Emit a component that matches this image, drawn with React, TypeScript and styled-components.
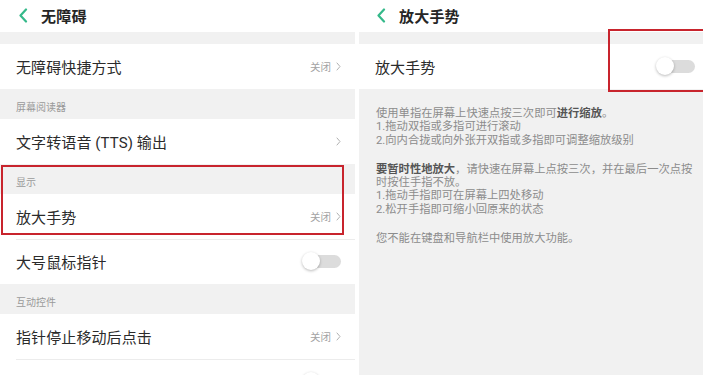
import React, { FC } from "react";
import styled, { createGlobalStyle } from "styled-components";

const GlobalStyle = createGlobalStyle`
    html, body {
        margin: 0;
        padding: 0;
        background: #fff;
        overflow: hidden;
    }
    body {
        font-family: Roboto, "Noto Sans CJK SC", "Noto Sans", sans-serif;
    }
`;

const Page = styled.div`
    width: 703px;
    height: 375px;
    display: flex;
    gap: 4px;
    overflow: hidden;
    background: #fff;
`;

const Panel = styled.div<{ $width?: number }>`
    position: relative;
    flex: ${(p) => (p.$width ? `0 0 ${p.$width}px` : "1")};
    display: flex;
    flex-direction: column;
    background: #fff;
    overflow: hidden;

    & > * {
        flex-shrink: 0;
    }
`;

const Header = styled.div<{ $pad: number }>`
    height: 32px;
    display: flex;
    align-items: center;
    padding-left: ${(p) => p.$pad}px;
    gap: 13px;
    padding-bottom: 1px;
    box-sizing: border-box;

    h1 {
        margin: 0;
        font-size: 15px;
        font-weight: 700;
        color: #262626;
        letter-spacing: 0.2px;
    }
`;

const Band = styled.div`
    height: 12px;
    background: #f1f1f1;
`;

const Section = styled.div`
    height: 30px;
    box-sizing: border-box;
    padding: 13px 16px 0;
    background: #f1f1f1;
    font-size: 10px;
    line-height: 12px;
    color: #9a9a9a;
`;

const Row = styled.div<{ $divider?: boolean; $right?: number }>`
    height: 45px;
    display: flex;
    align-items: center;
    justify-content: space-between;
    padding: 0 ${(p) => p.$right ?? 14}px 0 16px;
    box-sizing: border-box;
    position: relative;

    ${(p) =>
        p.$divider &&
        `
        &::before {
            content: "";
            position: absolute;
            left: 16px;
            right: 0;
            top: 0;
            border-top: 1px solid #ececec;
        }
    `}
`;

const Label = styled.span`
    font-size: 15px;
    color: #2b2b2b;
    letter-spacing: 0.1px;
`;

const Value = styled.span`
    display: flex;
    align-items: center;
    gap: 5px;
    font-size: 10.5px;
    color: #a3a3a3;
`;

const Track = styled.span`
    position: relative;
    width: 34px;
    height: 13px;
    border-radius: 7px;
    background: #dcdcdc;
    display: inline-block;
    margin-left: 6px;

    &::after {
        content: "";
        position: absolute;
        left: -5px;
        top: -3px;
        width: 18px;
        height: 18px;
        border-radius: 50%;
        background: #fff;
        box-shadow: 0 1px 3px rgba(0, 0, 0, 0.28);
    }
`;

const Desc = styled.div`
    flex: 1 0 auto;
    background: #f1f1f1;
    padding: 18px 8px 0 17px;
    font-size: 11.3px;
    line-height: 13.3px;
    color: #8c8c8c;
    white-space: nowrap;

    p {
        margin: 0 0 16px;
    }

    b {
        color: #555;
        font-weight: 700;
    }
`;

const Marker = styled.div<{ $l: number; $t: number; $w: number; $h: number }>`
    position: absolute;
    left: ${(p) => p.$l}px;
    top: ${(p) => p.$t}px;
    width: ${(p) => p.$w}px;
    height: ${(p) => p.$h}px;
    border: 2px solid #c8242d;
    box-sizing: border-box;
    pointer-events: none;
`;

const Back: FC = () => (
    <svg width="10" height="15" viewBox="0 0 10 15">
        <path d="M8 1.5 L2.5 7.5 L8 13.5" fill="none" stroke="#35b98a" strokeWidth="2.2" strokeLinecap="round" strokeLinejoin="round" />
    </svg>
);

const Chevron: FC = () => (
    <svg width="5" height="9" viewBox="0 0 5 9">
        <path d="M1 1 L4 4.5 L1 8" fill="none" stroke="#b0b0b0" strokeWidth="1" strokeLinecap="round" />
    </svg>
);

const Off: FC = () => (
    <Value>
        关闭
        <Chevron />
    </Value>
);

const App: FC = () => {
    return (
        <Page>
            <GlobalStyle />
            <Panel $width={355}>
                <Header $pad={18}>
                    <Back />
                    <h1>无障碍</h1>
                </Header>
                <Band />
                <Row>
                    <Label>无障碍快捷方式</Label>
                    <Off />
                </Row>
                <Section>屏幕阅读器</Section>
                <Row>
                    <Label>文字转语音 (TTS) 输出</Label>
                    <Value>
                        <Chevron />
                    </Value>
                </Row>
                <Section>显示</Section>
                <Row>
                    <Label>放大手势</Label>
                    <Off />
                </Row>
                <Row $divider>
                    <Label>大号鼠标指针</Label>
                    <Track />
                </Row>
                <Section>互动控件</Section>
                <Row>
                    <Label>指针停止移动后点击</Label>
                    <Off />
                </Row>
                <Row $divider>
                    <Label>按电源按钮结束通话</Label>
                    <Track />
                </Row>
                <Marker $l={1} $t={165} $w={343} $h={70} />
            </Panel>
            <Panel>
                <Header $pad={17}>
                    <Back />
                    <h1>放大手势</h1>
                </Header>
                <Band />
                <Row $right={8}>
                    <Label>放大手势</Label>
                    <Track />
                </Row>
                <Desc>
                    <p>
                        使用单指在屏幕上快速点按三次即可<b>进行缩放</b>。<br />
                        1.拖动双指或多指可进行滚动<br />
                        2.向内合拢或向外张开双指或多指即可调整缩放级别
                    </p>
                    <p>
                        <b>要暂时性地放大</b>，请快速在屏幕上点按三次，并在最后一次点按<br />
                        时按住手指不放。<br />
                        1.拖动手指即可在屏幕上四处移动<br />
                        2.松开手指即可缩小回原来的状态
                    </p>
                    <p>您不能在键盘和导航栏中使用放大功能。</p>
                </Desc>
                <Marker $l={249} $t={29} $w={110} $h={63} />
            </Panel>
        </Page>
    );
};

export default App;
